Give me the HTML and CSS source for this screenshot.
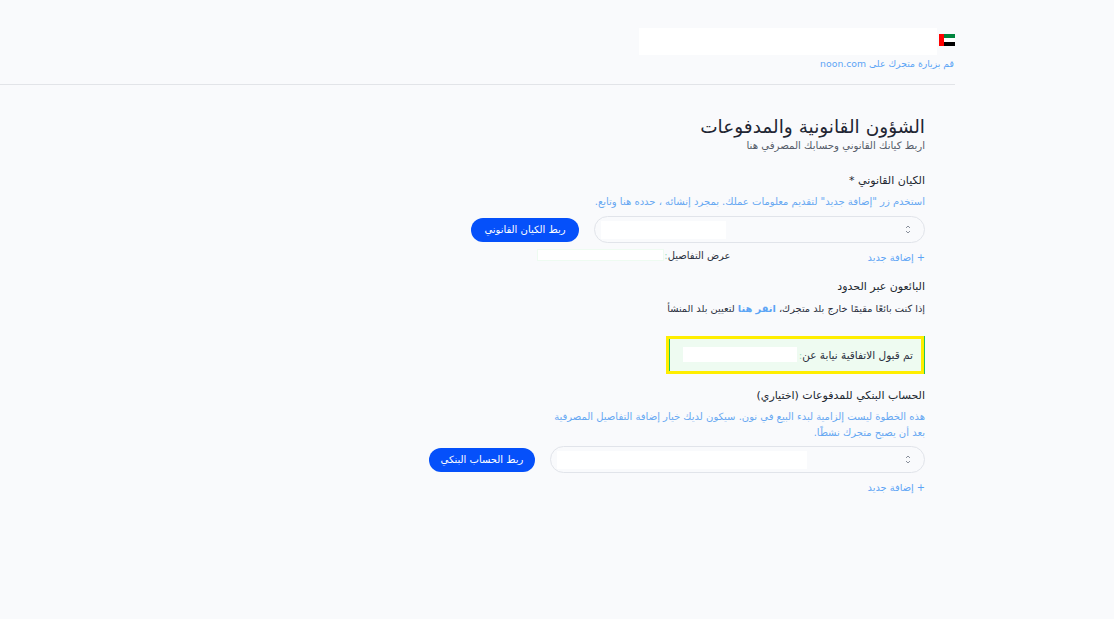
FILE: index.html
```html
<!DOCTYPE html>
<html lang="ar" dir="rtl">
<head>
<meta charset="utf-8">
<title>الشؤون القانونية والمدفوعات</title>
<link rel="stylesheet" href="styles.css">
</head>
<body>
<div class="page">
  <header class="header">
    <div class="store-row">
      <svg class="flag" width="16" height="12" viewBox="0 0 16 12" aria-hidden="true">
        <rect width="16" height="4" fill="#00843d"/>
        <rect y="4" width="16" height="4" fill="#fff"/>
        <rect y="8" width="16" height="4" fill="#000"/>
        <rect width="5" height="12" fill="#f00"/>
      </svg>
      <div class="mask store-mask"></div>
    </div>
    <a class="visit">قم بزيارة متجرك على noon.com</a>
  </header>
  <main class="main">
    <h1 class="title">الشؤون القانونية والمدفوعات</h1>
    <p class="subtitle">اربط كيانك القانوني وحسابك المصرفي هنا</p>

    <section class="entity">
      <h2 class="label">الكيان القانوني *</h2>
      <p class="hint">استخدم زر "إضافة جديد" لتقديم معلومات عملك. بمجرد إنشائه ، حدده هنا وتابع.</p>
      <div class="select-row">
        <div class="select select-entity">
          <span class="chevrons"><svg width="6" height="9" viewBox="0 0 6 9" aria-hidden="true"><path d="M1 3 3 1l2 2M1 6l2 2 2-2" fill="none" stroke="#8a909c" stroke-width="1"/></svg></span>
          <div class="mask entity-mask"></div>
        </div>
        <button class="btn">ربط الكيان القانوني</button>
      </div>
      <div class="below-row">
        <a class="add">+ إضافة جديد</a>
        <div class="details">
          <span class="details-text">عرض التفاصيل</span>
          <span class="colon">:</span>
          <div class="mask details-mask"></div>
        </div>
      </div>
    </section>

    <section class="cross">
      <h2 class="label">البائعون عبر الحدود</h2>
      <p class="cross-text">إذا كنت بائعًا مقيمًا خارج بلد متجرك، <a class="link">انقر هنا</a> لتعيين بلد المنشأ</p>
    </section>

    <div class="agreement">
      <span>تم قبول الاتفاقية نيابة عن</span>
      <span class="colon">:</span>
      <div class="mask agreement-mask"></div>
    </div>

    <section class="bank">
      <h2 class="label">الحساب البنكي للمدفوعات (اختياري)</h2>
      <p class="hint hint-bank">هذه الخطوة ليست إلزامية لبدء البيع في نون. سيكون لديك خيار إضافة التفاصيل المصرفية بعد أن يصبح متجرك نشطًا.</p>
      <div class="select-row">
        <div class="select select-bank">
          <span class="chevrons"><svg width="6" height="9" viewBox="0 0 6 9" aria-hidden="true"><path d="M1 3 3 1l2 2M1 6l2 2 2-2" fill="none" stroke="#8a909c" stroke-width="1"/></svg></span>
          <div class="mask bank-mask"></div>
        </div>
        <button class="btn">ربط الحساب البنكي</button>
      </div>
      <a class="add add-bank">+ إضافة جديد</a>
    </section>
  </main>
</div>
</body>
</html>
```
FILE: styles.css
```css
* { box-sizing: border-box; }
html, body { margin: 0; padding: 0; }
body {
  background: #f9fafc;
  font-family: "DejaVu Sans", "Noto Sans", sans-serif;
  color: #2a3040;
  height: 619px;
  overflow: hidden;
}
.page { width: 955px; margin-right: 159px; }
.header {
  height: 85px;
  padding-top: 28px;
  border-bottom: 1px solid #e2e4e8;
}
.store-row { display: flex; align-items: flex-start; height: 27px; }
.flag { display: block; flex: none; margin-top: 6px; }
.mask { background: #fff; }
.store-mask { width: 298px; height: 27px; margin-right: 2px; }
.visit {
  display: block;
  margin-top: 2px;
  margin-right: 1px;
  font-size: 9.3px;
  line-height: 14px;
  color: #5ba4f5;
}
.main { padding: 32px 30px 0 0; }
.title {
  margin: 0;
  font-size: 18.5px;
  font-weight: 400;
  line-height: 20px;
  color: #1f2633;
}
.subtitle {
  margin: 2px 0 0;
  font-size: 10.2px;
  line-height: 14px;
  color: #555c69;
}
.entity { margin-top: 20px; }
.label {
  margin: 0;
  font-size: 11px;
  font-weight: 400;
  line-height: 16px;
  color: #20262f;
}
.hint {
  margin: 6px 0 0;
  font-size: 10px;
  line-height: 14px;
  color: #67a8f2;
}
.select-row { display: flex; align-items: center; gap: 15px; margin-top: 7px; }
.select {
  display: flex;
  align-items: center;
  height: 27px;
  border: 1px solid #e1e4ea;
  border-radius: 14px;
  padding-right: 13px;
  background: #f9fafc;
}
.select-entity { width: 331px; }
.select-bank { width: 375px; }
.chevrons { display: flex; flex: none; }
.entity-mask { width: 125px; height: 18px; margin-right: 179px; }
.bank-mask { width: 250px; height: 18px; margin-right: 98px; }
.btn {
  flex: none;
  width: 108px;
  height: 24px;
  border: 0;
  border-radius: 12px;
  padding: 0;
  background: #0550fa;
  color: #fff;
  font: 400 10px/24px "DejaVu Sans", sans-serif;
}
.below-row { display: flex; margin-top: 8px; }
.add {
  display: block;
  font-size: 9.8px;
  line-height: 14px;
  color: #5ba4f5;
}
.details {
  display: flex;
  align-items: center;
  margin-right: 137px;
  margin-top: -3px;
  height: 14px;
  font-size: 10px;
  color: #2a3040;
}
.details-text { white-space: nowrap; }
.colon { color: #9fdcc0; }
.details-mask {
  width: 127px;
  height: 12px;
  border: 1px solid #eefbf1;
}
.cross { margin-top: 14px; }
.cross-text {
  margin: 7px 0 0;
  font-size: 9.8px;
  line-height: 14px;
}
.link { color: #5ba4f5; font-weight: 700; }
.agreement {
  display: flex;
  align-items: center;
  width: 258px;
  height: 38px;
  margin: 20px 1px 0 0;
  padding: 0 8px 1px 0;
  background: #eefbf1;
  border: 3px solid #ffee00;
  box-shadow: 1px 0 0 #22c45e, inset 1px 0 0 #22c45e;
  font-size: 10.5px;
  color: #2a3040;
}
.agreement-mask { width: 114px; height: 15px; margin-right: 2px; }
.bank { margin-top: 14px; }
.hint-bank { width: 375px; margin-top: 5px; line-height: 16px; }
.bank .select-row { margin-top: 5px; }
.bank .btn { width: 106px; }
.add-bank { margin-top: 8px; }
```
